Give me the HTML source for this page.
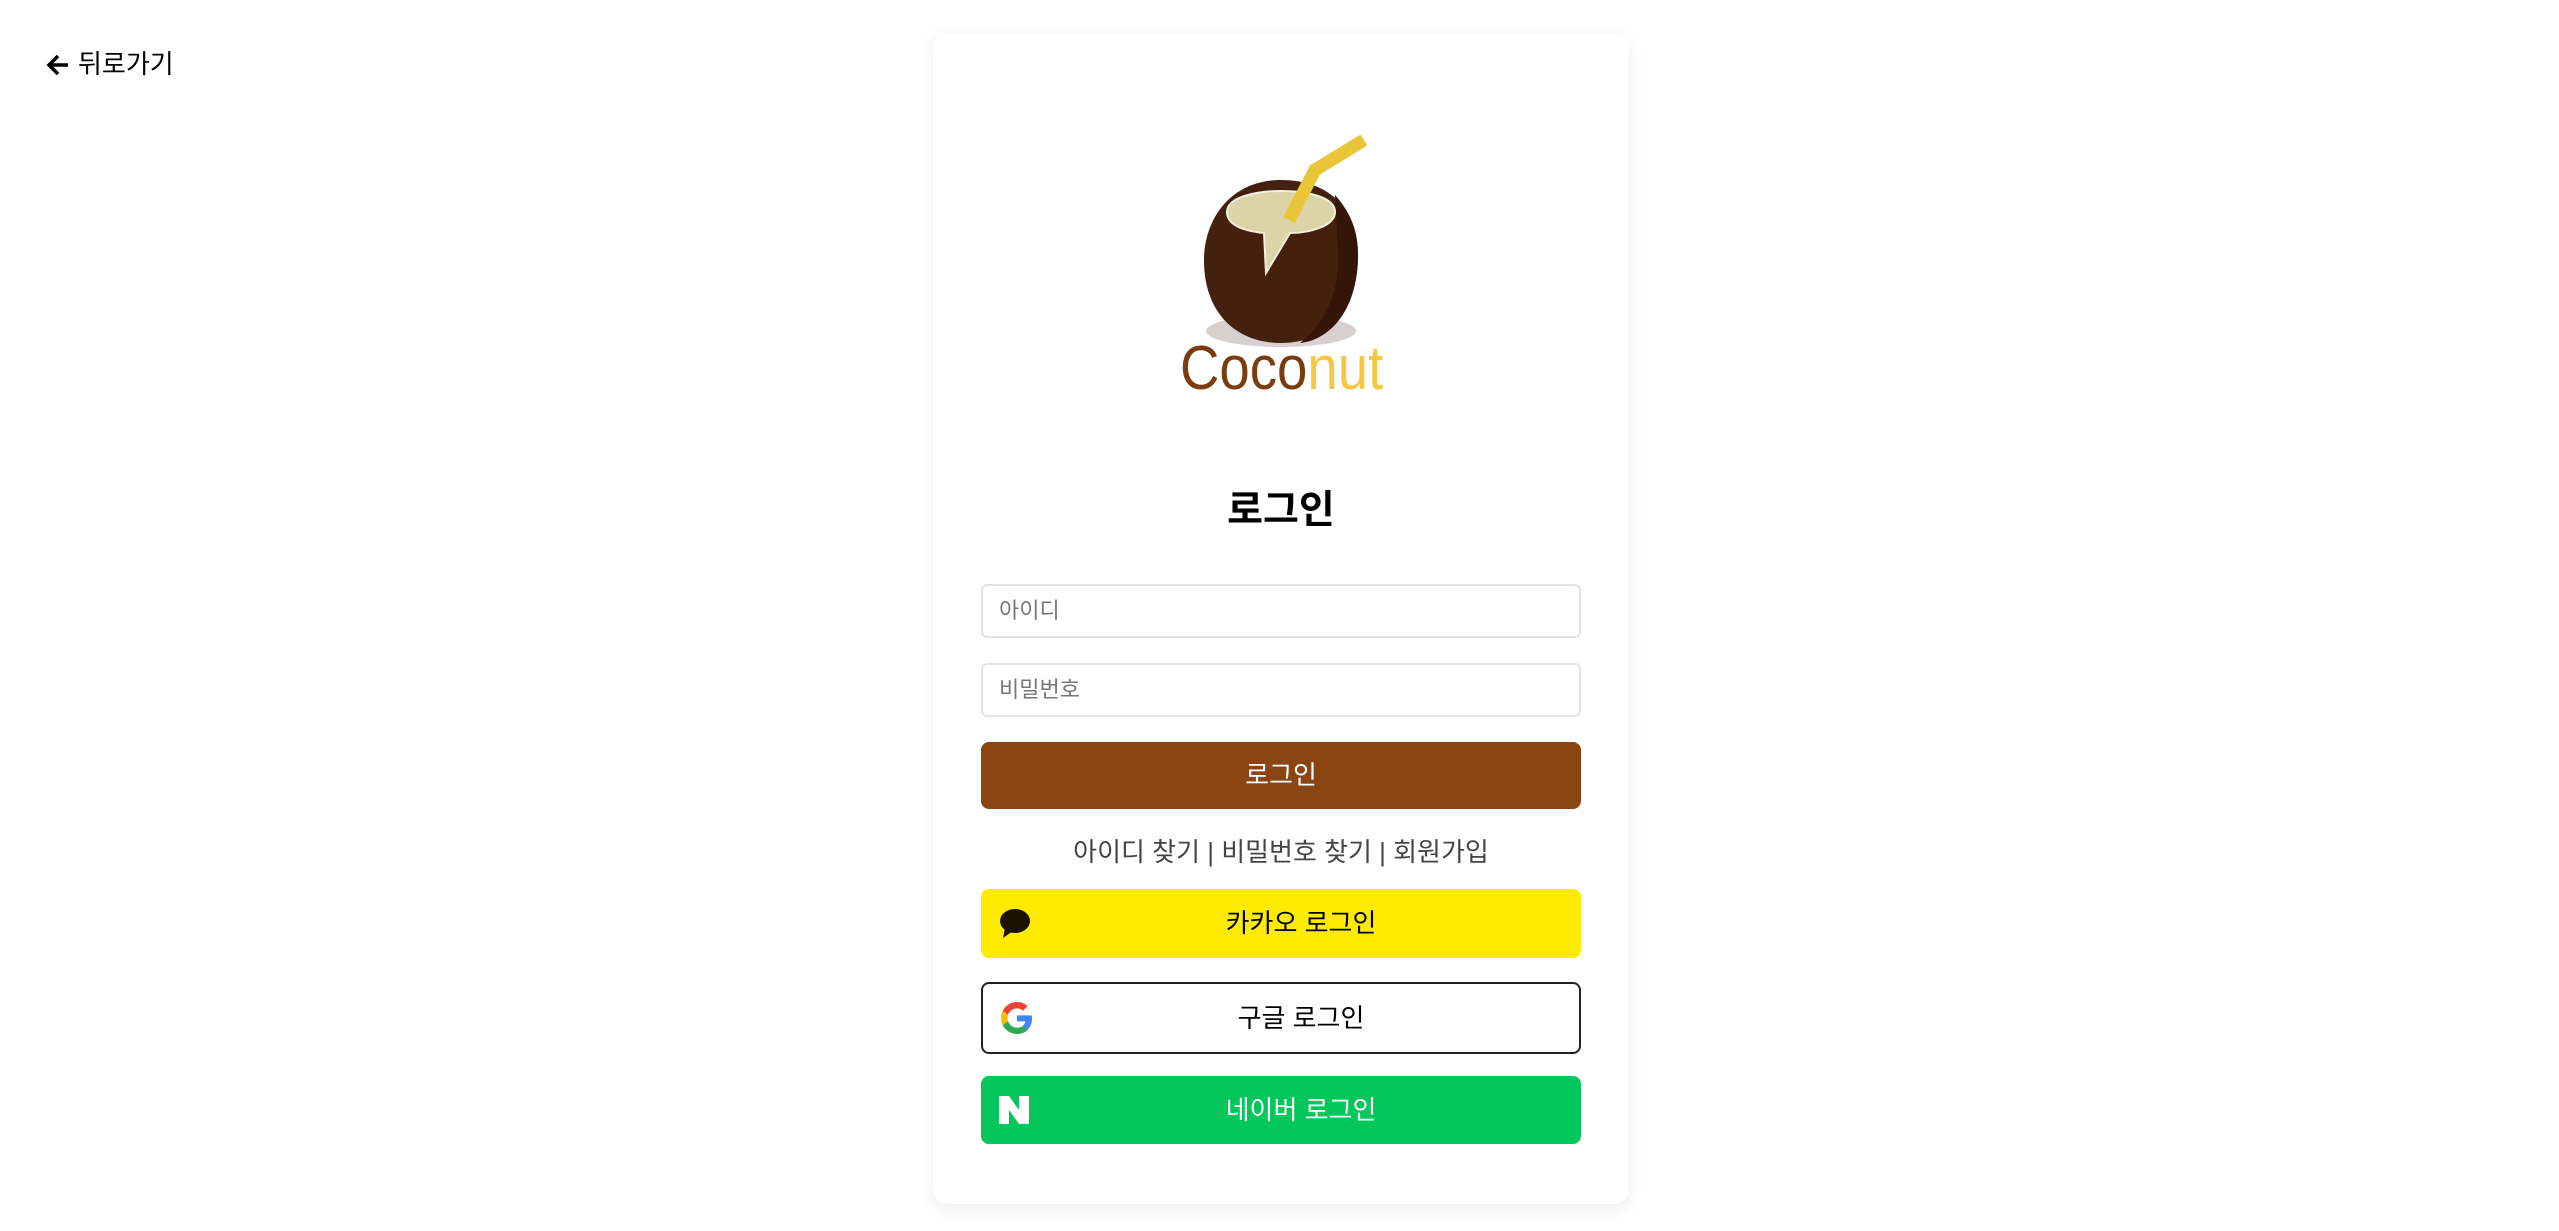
<!DOCTYPE html>
<html><head><meta charset="utf-8"><style>
*{box-sizing:border-box;margin:0;padding:0}
body{width:2559px;height:1231px;background:#fff;position:relative;font-family:"Liberation Sans","Noto Sans CJK KR",sans-serif;overflow:hidden}
.back{position:absolute;left:46px;top:47px;font-size:26px;color:#000;line-height:34px;padding-left:32px}
.card{position:absolute;left:933px;top:33px;width:696px;height:1171px;background:#fff;border-radius:14px;box-shadow:0 4px 16px rgba(0,0,0,0.08)}
.abs{position:absolute}
.title{left:0;width:100%;top:446px;text-align:center;font-size:39px;font-weight:bold;color:#000}
.inp{left:48px;width:600px;height:54px;border:2px solid #e3e3e3;border-radius:6px;font-size:22px;color:#777;padding-left:16px;line-height:50px}
.btn{left:48px;width:600px;border-radius:8px;text-align:center;font-size:26px;padding-left:40px}
.links{left:0;width:100%;top:799px;text-align:center;font-size:26px;color:#444;line-height:40px}
</style></head><body>
<div class="back"><svg class="abs" style="left:0;top:7px" width="24" height="22" viewBox="0 0 24 22"><path d="M22 11H4M12 2L3 11L12 20" fill="none" stroke="#000" stroke-width="3.5"/></svg>뒤로가기</div>
<div class="card">
<div class="abs title">로그인</div>
<div class="abs inp" style="top:551px">아이디</div>
<div class="abs inp" style="top:630px">비밀번호</div>
<div class="abs btn" style="top:709px;height:67px;line-height:67px;background:#8b4513;color:#fff;padding-left:0">로그인</div>
<div class="abs links">아이디 찾기 | 비밀번호 찾기 | 회원가입</div>
<div class="abs btn" style="top:856px;height:69px;line-height:69px;background:#ffeb00;color:#000">
<svg class="abs" style="left:18px;top:19px" width="32" height="32" viewBox="0 0 32 32"><ellipse cx="16" cy="13" rx="15" ry="12" fill="#1a1300"/><path d="M6 20 L4 30 L14 23Z" fill="#1a1300"/></svg>카카오 로그인</div>
<div class="abs btn" style="top:949px;height:72px;line-height:68px;background:#fff;border:2px solid #222;color:#000">
<svg class="abs" style="left:18px;top:18px" width="32" height="32" viewBox="0 0 48 48"><path fill="#EA4335" d="M24 9.5c3.5 0 6.6 1.2 9.1 3.6l6.8-6.8C35.8 2.4 30.2 0 24 0 14.6 0 6.6 5.4 2.6 13.300l7.9 6.2C12.4 13.7 17.7 9.5 24 9.5z"/><path fill="#4285F4" d="M46.5 24.5c0-1.600-.1-3.100-.4-4.5H24v9h12.7c-.6 2.900-2.200 5.400-4.700 7.100l7.600 5.900c4.500-4.100 6.900-10.200 6.900-17.500z"/><path fill="#FBBC05" d="M10.5 28.6c-.5-1.400-.8-3-.8-4.600s.3-3.200.8-4.600l-7.900-6.200C.9 16.600 0 20.200 0 24s.9 7.400 2.600 10.800l7.900-6.200z"/><path fill="#34A853" d="M24 48c6.500 0 11.900-2.100 15.900-5.800l-7.600-5.900c-2.100 1.400-4.900 2.300-8.300 2.300-6.300 0-11.600-4.200-13.500-9.900l-7.900 6.200C6.600 42.600 14.600 48 24 48z"/></svg>구글 로그인</div>
<div class="abs btn" style="top:1043px;height:68px;line-height:68px;background:#03c75a;color:#fff">
<svg class="abs" style="left:18px;top:20px" width="30" height="28" viewBox="0 0 30 28"><path d="M0 0H10L20 14V0H30V28H20L10 14V28H0Z" fill="#fff"/></svg>네이버 로그인</div>
</div>
<svg class="abs" style="left:1150px;top:120px" width="260" height="250" viewBox="0 0 260 250">
<ellipse cx="131" cy="211" rx="75" ry="16" fill="#d8d0cf"/>
<path d="M131 60 C80 60 54 100 54 140 C54 195 88 223 131 223 C178 223 208 190 208 135 C208 90 180 60 131 60Z" fill="#44200f"/>
<path d="M185 75 C203 95 208 115 208 135 C208 190 180 220 150 223 C178 200 190 170 188 130 Z" fill="#351508"/>
<path d="M77 92 C77 76 110 71 131 71 C160 71 185 78 185 92 C185 106 160 113 140 113 L116 153 L114 113 C95 111 77 106 77 92Z" fill="#dcd4a8" stroke="#f3efe0" stroke-width="2"/>
<polyline points="214,20 165,50 139,100" fill="none" stroke="#e9c638" stroke-width="13"/>
</svg>
<div class="abs" style="left:1180px;top:334px;font-size:62px;line-height:70px;transform:scaleX(0.88);transform-origin:left top"><span style="color:#7b3d0f">Coco</span><span style="color:#f7c744">nut</span></div>
</body></html>
